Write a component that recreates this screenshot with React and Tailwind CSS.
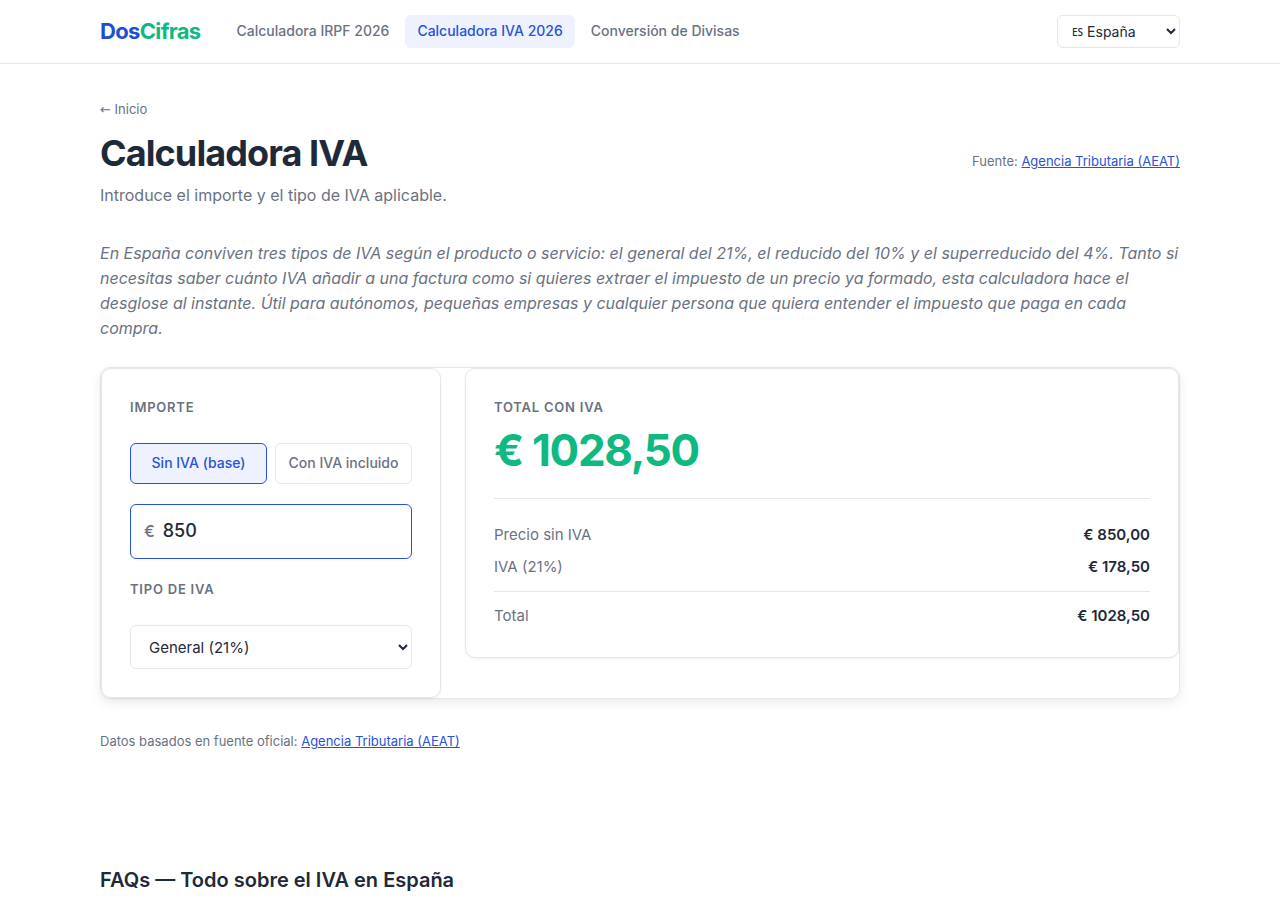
import React, { useState } from "react";

const NAV = [
  { label: "Calculadora IRPF 2026", href: "#irpf" },
  { label: "Calculadora IVA 2026", href: "#iva", active: true },
  { label: "Conversión de Divisas", href: "#divisas" },
];

const COUNTRIES = [
  { code: "ES", name: "España" },
  { code: "MX", name: "México" },
  { code: "AR", name: "Argentina" },
];

const RATES = [
  { value: 21, label: "General (21%)" },
  { value: 10, label: "Reducido (10%)" },
  { value: 4, label: "Superreducido (4%)" },
];

const MODES = [
  { id: "base", label: "Sin IVA (base)" },
  { id: "incluido", label: "Con IVA incluido" },
];

const euro = (n) => `€ ${n.toFixed(2).replace(".", ",")}`;

function SourceLink() {
  return (
    <a href="https://sede.agenciatributaria.gob.es" className="text-[#2952d9] underline">
      Agencia Tributaria (AEAT)
    </a>
  );
}

function Header() {
  const [country, setCountry] = useState("ES");

  return (
    <header className="border-b border-gray-200">
      <div className="mx-auto flex h-[63px] max-w-[1128px] items-center gap-6 px-6">
        <a href="#inicio" className="pb-0.5 text-[22px] font-bold leading-8 tracking-[-0.03em] text-[#1d4ed8]">
          Dos<span className="text-[#10b981]">Cifras</span>
        </a>
        <nav className="flex flex-1 gap-1">
          {NAV.map((item) => (
            <a key={item.label} href={item.href}
              className={`rounded-md px-3 pt-[5px] pb-[7px] text-sm leading-[21px] font-medium ${item.active ? "bg-[#eef2ff] text-[#2952d9]" : "text-gray-500"}`}>
              {item.label}
            </a>
          ))}
        </nav>
        <label className="flex h-[33px] w-[123px] items-center rounded-md border border-gray-200 pl-3.5">
          <span className="pt-0.5 font-['Noto_Sans',sans-serif] text-[10px] font-medium text-gray-800">{country}</span>
          <select aria-label="País" value={country} onChange={(e) => setCountry(e.target.value)}
            className="min-w-0 flex-1 bg-transparent text-sm text-gray-800 outline-none">
            {COUNTRIES.map((c) => <option key={c.code} value={c.code}>{c.name}</option>)}
          </select>
        </label>
      </div>
    </header>
  );
}

function Row({ label, value }) {
  return (
    <div className="flex justify-between text-[15px] leading-6">
      <dt className="text-gray-500">{label}</dt>
      <dd className="font-semibold text-gray-800">{value}</dd>
    </div>
  );
}

function Calculator() {
  const [mode, setMode] = useState("base");
  const [amount, setAmount] = useState("850");
  const [rate, setRate] = useState(21);

  const n = parseFloat(amount.replace(",", ".")) || 0;
  const base = mode === "base" ? n : n / (1 + rate / 100);
  const tax = (base * rate) / 100;

  return (
    <div className="grid grid-cols-1 items-start gap-6 rounded-[10px] border border-gray-200 shadow-[0_4px_12px_rgba(0,0,0,0.08)] md:grid-cols-[340px_1fr]">
      <div className="rounded-[10px] border border-gray-200 bg-white p-7 shadow-[0_1px_3px_rgba(0,0,0,0.06)]">
        <label htmlFor="importe" className="block text-[13px] leading-5 font-semibold tracking-[0.06em] text-gray-500 uppercase">Importe</label>
        <div className="mt-[26px] grid grid-cols-2 gap-2">
          {MODES.map((m) => (
            <button key={m.id} type="button" aria-pressed={mode === m.id} onClick={() => setMode(m.id)}
              className={`h-[41px] rounded-md border pb-0.5 text-sm font-medium whitespace-nowrap ${mode === m.id ? "border-[#2952d9] bg-[#eef2ff] text-[#2952d9]" : "border-gray-200 bg-white text-gray-500"}`}>
              {m.label}
            </button>
          ))}
        </div>
        <div className="mt-5 flex h-[55px] items-center gap-2 rounded-md border border-[#2952d9] px-[13px] pb-0.5">
          <span className="text-base font-medium text-gray-500">€</span>
          <input id="importe" type="text" inputMode="decimal" value={amount} onChange={(e) => setAmount(e.target.value)}
            className="w-full min-w-0 bg-transparent text-lg font-medium text-gray-800 outline-none"/>
        </div>
        <label htmlFor="tipo" className="mt-5 block text-[13px] leading-5 font-semibold tracking-[0.06em] text-gray-500 uppercase">Tipo de IVA</label>
        <select id="tipo" value={rate} onChange={(e) => setRate(Number(e.target.value))}
          className="mt-[26px] block h-11 w-full rounded-md border border-gray-200 bg-white pl-3.5 text-[15px] text-gray-800">
          {RATES.map((r) => <option key={r.value} value={r.value}>{r.label}</option>)}
        </select>
      </div>

      <div className="rounded-[10px] border border-gray-200 bg-white p-7 shadow-[0_1px_3px_rgba(0,0,0,0.06)]">
        <p className="text-[13px] leading-5 font-semibold tracking-[0.06em] text-gray-500 uppercase">Total con IVA</p>
        <p className="mt-2 text-[44px] leading-[50px] font-bold tracking-[-0.03em] text-[#10b981]">{euro(base + tax)}</p>
        <dl className="mt-[23px] border-t border-gray-200 pt-6">
          <div className="grid gap-2 pb-3">
            <Row label="Precio sin IVA" value={euro(base)}/>
            <Row label={`IVA (${rate}%)`} value={euro(tax)}/>
          </div>
          <div className="border-t border-gray-200 pt-3 pb-px">
            <Row label="Total" value={euro(base + tax)}/>
          </div>
        </dl>
      </div>
    </div>
  );
}

export default function App() {
  return (
    <div className="bg-white font-['Inter',sans-serif] text-gray-800">
      <Header/>
      <main className="mx-auto max-w-[1128px] px-6 pt-[35px]">
        <a href="#inicio" className="block w-fit text-[13px] leading-5 text-gray-500">
          <span className="font-['DejaVu_Sans',sans-serif]">←</span> Inicio
        </a>
        <div className="mt-3 flex flex-wrap items-start justify-between gap-4">
          <div>
            <h1 className="text-4xl leading-[42px] font-bold tracking-tight">Calculadora IVA</h1>
            <p className="mt-2 text-base leading-[26px] text-gray-500">Introduce el importe y el tipo de IVA aplicable.</p>
          </div>
          <p className="pt-[19px] text-[13px] leading-5 text-gray-500">Fuente: <SourceLink/></p>
        </div>
        <p className="mt-[33px] mb-[26px] text-base leading-[25px] text-gray-500 italic">
          En España conviven tres tipos de IVA según el producto o servicio: el general del 21%, el reducido del 10% y el
          superreducido del 4%. Tanto si necesitas saber cuánto IVA añadir a una factura como si quieres extraer el impuesto
          de un precio ya formado, esta calculadora hace el desglose al instante. Útil para autónomos, pequeñas empresas y
          cualquier persona que quiera entender el impuesto que paga en cada compra.
        </p>
        <Calculator/>
        <p className="mt-8 text-[13px] leading-5 text-gray-500">Datos basados en fuente oficial: <SourceLink/></p>
        <section className="mt-[113px]">
          <h2 className="text-xl leading-8 font-semibold">FAQs — Todo sobre el IVA en España</h2>
        </section>
      </main>
    </div>
  );
}
